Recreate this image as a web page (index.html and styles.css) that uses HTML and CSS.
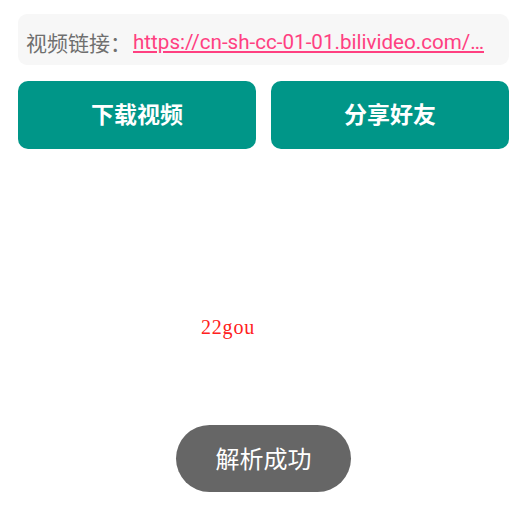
FILE: index.html
```html
<!DOCTYPE html>
<html lang="zh">
<head>
<meta charset="utf-8">
<link rel="stylesheet" href="styles.css">
</head>
<body>
<div class="page">
  <div class="link-box">
    <span class="label">视频链接：</span>
    <span class="link">https://cn-sh-cc-01-01.bilivideo.com/…</span>
  </div>
  <div class="actions">
    <div class="btn">下载视频</div>
    <div class="btn">分享好友</div>
  </div>
  <div class="tag">22gou</div>
</div>
<div class="toast">解析成功</div>
</body>
</html>
```
FILE: styles.css
```css
html, body {
  margin: 0;
  padding: 0;
  background: #ffffff;
}
body {
  width: 509px;
  height: 507px;
  overflow: hidden;
  position: relative;
  font-family: Roboto, "Noto Sans CJK SC", sans-serif;
}
.page {
  padding: 14px 0 0 18px;
  width: 491px;
}
.link-box {
  height: 51px;
  box-sizing: border-box;
  background: #f7f7f7;
  border-radius: 9px;
  display: flex;
  align-items: center;
  padding: 5px 6px 0 8px;
  white-space: nowrap;
}
.label {
  color: #6f6f6f;
  font-size: 21px;
  flex: none;
  margin-right: 2px;
}
.link {
  color: #ff4081;
  font-size: 20.6px;
  text-decoration: underline;
  overflow: hidden;
  text-overflow: ellipsis;
  min-width: 0;
}
.actions {
  margin-top: 16px;
  display: flex;
  gap: 15px;
}
.btn {
  flex: 1;
  height: 68px;
  box-sizing: border-box;
  padding-bottom: 4px;
  background: #009688;
  border-radius: 10px;
  color: #ffffff;
  font-size: 23px;
  font-weight: bold;
  display: flex;
  align-items: center;
  justify-content: center;
}
.tag {
  margin-top: 167px;
  padding-left: 183px;
  font-family: "Liberation Serif", serif;
  font-size: 20px;
  letter-spacing: 0.8px;
  color: #ff2020;
}
.toast {
  position: absolute;
  left: 176px;
  top: 425px;
  width: 175px;
  height: 67px;
  box-sizing: border-box;
  padding-bottom: 2px;
  border-radius: 34px;
  background: #666666;
  color: #ffffff;
  font-size: 24px;
  display: flex;
  align-items: center;
  justify-content: center;
}
```
